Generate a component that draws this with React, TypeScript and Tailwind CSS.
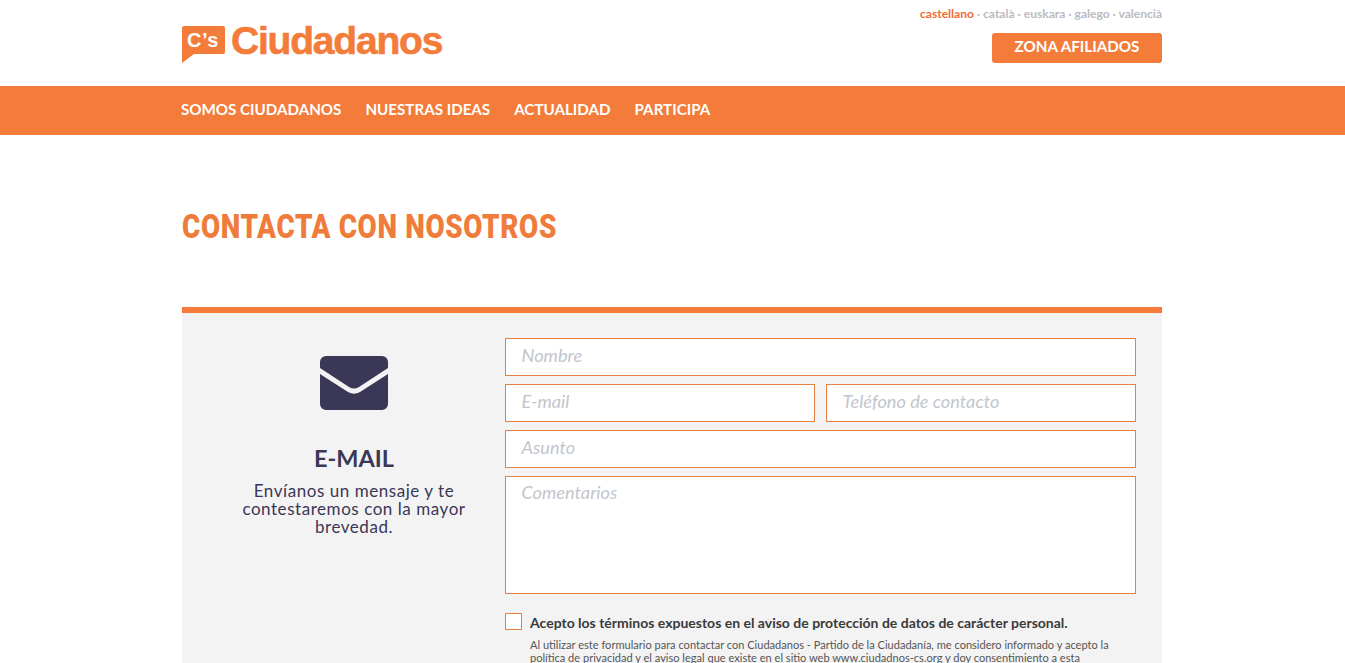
import React from "react";

function Field({ label, className = "" }: { label: string; className?: string }) {
  return (
    <div className={`h-[38px] border border-[#e5803f] bg-white pl-[15.5px] text-[18.2px] italic text-[#c2c6cc] ${className}`}>
      {label}
    </div>
  );
}

export default function App() {
  return (
    <div className="h-[663px] overflow-hidden bg-white font-['Lato','Liberation_Sans',sans-serif]">
      <header className="mx-auto flex h-[86px] w-[981px] justify-between pr-[1px]">
        <div className="flex items-start pt-[22px]">
          <div className="relative mt-[4px] h-[37px] w-[43px]">
            <svg viewBox="0 0 43 37" className="absolute inset-0 h-full w-full">
              <path d="M2 0H41a2 2 0 0 1 2 2V26a2 2 0 0 1-2 2H12L0 37V2a2 2 0 0 1 2-2Z" fill="#f37c3a" />
            </svg>
            <span className="absolute left-[5px] top-[3px] font-['Liberation_Sans',sans-serif] text-[20px] leading-[23px] font-bold tracking-[0.5px] text-white">C’s</span>
          </div>
          <span className="ml-[6px] font-['Liberation_Sans',sans-serif] text-[39px] leading-[38px] font-bold tracking-[-1.2px] text-[#f37c3a] [-webkit-text-stroke:0.6px_#f37c3a]">Ciudadanos</span>
        </div>
        <div className="flex flex-col items-end pt-[6px]">
          <p className="text-[12.05px] leading-[15px] font-bold text-[#b9bbc2]">
            <span className="text-[#ef6c33]">castellano</span> · català · euskara · galego · valencià
          </p>
          <button className="mt-[12px] h-[30px] w-[170px] rounded-[3px] bg-[#f37c3a] pb-[4px] text-[15.2px] leading-[26px] font-bold text-white">ZONA AFILIADOS</button>
        </div>
      </header>
      <nav className="h-[49px] bg-[#f37c3a]">
        <ul className="mx-auto flex h-full w-[981px] items-center gap-[24px] pr-[1px] pb-[2px] text-[15.15px] font-bold text-white">
          <li className="ml-[-1px]">SOMOS CIUDADANOS</li>
          <li>NUESTRAS IDEAS</li>
          <li>ACTUALIDAD</li>
          <li>PARTICIPA</li>
        </ul>
      </nav>
      <main className="mx-auto w-[981px] pr-[1px]">
        <h1 className="mt-[72px] h-[100px] origin-left scale-x-[0.818] font-['Roboto',sans-serif] text-[34px] leading-[38px] font-black tracking-[0.8px] whitespace-nowrap text-[#f07c3c]">CONTACTA CON NOSOTROS</h1>
        <section className="flex border-t-[6px] border-[#f37c3a] bg-[#f3f3f3] pt-[25px] pr-[26px]">
          <div className="flex w-[323px] flex-col items-center pt-[18px] pl-[21px] text-center text-[#3a3757]">
            <svg viewBox="0 0 68 54" className="h-[54px] w-[68px]">
              <path d="M6 0H62a6 6 0 0 1 6 6V12L39 31q-5 3-10 0L0 12V6a6 6 0 0 1 6-6Z" fill="#3a3757" />
              <path d="M0 18L28 36q6 3.5 12 0L68 18V48a6 6 0 0 1-6 6H6a6 6 0 0 1-6-6Z" fill="#3a3757" />
            </svg>
            <h2 className="mt-[33px] text-[23.5px] leading-[30px] font-bold">E-MAIL</h2>
            <p className="mt-[9px] w-[240px] text-[17px] leading-[18px] tracking-[0.55px]">Envíanos un mensaje y te contestaremos con la mayor brevedad.</p>
          </div>
          <div className="flex-1">
            <div className="flex flex-col gap-[8px]">
              <Field label="Nombre" className="leading-[32px]" />
              <div className="flex gap-[11px]">
                <Field label="E-mail" className="flex-1 leading-[32px]" />
                <Field label="Teléfono de contacto" className="flex-1 leading-[32px]" />
              </div>
              <Field label="Asunto" className="leading-[32px]" />
              <Field label="Comentarios" className="h-[118px] leading-[30px]" />
            </div>
            <div className="mt-[20px] flex">
              <div className="mt-[-1px] h-[17px] w-[17px] shrink-0 border border-[#e5803f] bg-white" />
              <div className="ml-[8px]">
                <p className="text-[14px] leading-[18px] font-bold whitespace-nowrap text-[#3a3a3a]">Acepto los términos expuestos en el aviso de protección de datos de carácter personal.</p>
                <p className="mt-[6px] w-[600px] text-[11.05px] leading-[13px] text-[#555]">Al utilizar este formulario para contactar con Ciudadanos - Partido de la Ciudadanía, me considero informado y acepto la política de privacidad y el aviso legal que existe en el sitio web www.ciudadnos-cs.org y doy consentimiento a esta</p>
              </div>
            </div>
          </div>
        </section>
      </main>
    </div>
  );
}
